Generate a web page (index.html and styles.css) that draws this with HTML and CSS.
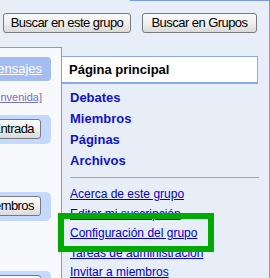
FILE: index.html
```html
<!DOCTYPE html>
<html lang="es">
<head>
<meta charset="utf-8">
<title>Grupo</title>
<link rel="stylesheet" href="styles.css">
</head>
<body>
<div class="page">
  <div class="top">
    <div class="topline"></div>
    <div class="search">
      <button class="btn btn-this">Buscar en este grupo</button>
      <button class="btn btn-all">Buscar en Grupos</button>
    </div>
  </div>
  <div class="main">
    <aside class="side">
      <div class="side-inner">
        <a class="tab" href="#">Mensajes</a>
        <a class="welcome" href="#">[Bienvenida]</a>
        <div class="pill pill-first"><button class="btn btn-side">Entrada</button></div>
        <div class="pill pill-second"><button class="btn btn-side">Miembros</button></div>
        <div class="pill pill-third"><button class="btn btn-side">Nuevo</button></div>
      </div>
    </aside>
    <nav class="nav">
      <div class="home">Página principal</div>
      <ul class="primary">
        <li><a href="#">Debates</a></li>
        <li><a href="#">Miembros</a></li>
        <li><a href="#">Páginas</a></li>
        <li><a href="#">Archivos</a></li>
      </ul>
      <div class="sep"></div>
      <ul class="secondary">
        <li><a href="#">Acerca de este grupo</a></li>
        <li><a href="#">Editar mi suscripción</a></li>
        <li><a href="#">Configuración del grupo</a></li>
        <li><a href="#">Tareas de administración</a></li>
        <li><a href="#">Invitar a miembros</a></li>
      </ul>
    </nav>
  </div>
  <div class="highlight"></div>
</div>
</body>
</html>
```
FILE: styles.css
```css
* { box-sizing: border-box; }
html, body { margin: 0; padding: 0; }
body {
  background: #e8eef7;
  font-family: "Liberation Sans", Arial, sans-serif;
  width: 270px;
  height: 278px;
  overflow: hidden;
}
.page {
  position: relative;
  width: 270px;
  height: 278px;
  border-right: 1px solid #7b9be0;
  background: #e8eef7;
}
.top { height: 47px; }
.topline {
  height: 1px;
  margin-left: 130px;
  background: #7b9be0;
}
.search {
  display: flex;
  gap: 11px;
  padding: 12px 0 0 3px;
}
.btn {
  font-family: "Liberation Sans", Arial, sans-serif;
  font-size: 13px;
  letter-spacing: -0.55px;
  color: #000;
  height: 20px;
  padding: 0 6px;
  border: 1px solid #7a7a7a;
  border-radius: 3px;
  background: linear-gradient(#fbfbfb, #f0f0f0 50%, #dadada);
  line-height: 18px;
  white-space: nowrap;
}
.btn-this { width: 128px; }
.btn-all { width: 115px; }
.main {
  display: flex;
  height: 231px;
}
.side {
  width: 62px;
  flex: none;
  border-top: 1px solid #7b9be0;
  border-right: 1px solid #7b9be0;
  background: #f7f9fd;
  overflow: hidden;
}
.side-inner {
  display: flex;
  flex-direction: column;
  align-items: flex-end;
  padding: 9px 10px 0 0;
}
.tab {
  flex: none;
  width: 90px;
  height: 24px;
  line-height: 24px;
  padding-right: 9px;
  text-align: right;
  background: #a3bdf0;
  border-radius: 4px;
  color: #fff;
  font-size: 13px;
  text-decoration: underline;
  white-space: nowrap;
}
.welcome {
  flex: none;
  margin: 9px 9px 0 0;
  font-size: 11px;
  line-height: 14px;
  color: #7b6fb8;
  white-space: nowrap;
}
.pill {
  flex: none;
  width: 100px;
  display: flex;
  justify-content: flex-end;
  padding: 4px 10px 5px 0;
  background: #c3d9ff;
  border-radius: 5px;
}
.pill-first { margin-top: 11px; }
.pill-second { margin-top: 48px; }
.pill-third { margin-top: 50px; }
.btn-side { flex: none; }
.nav {
  flex: 1;
  padding-top: 9px;
}
.home {
  margin-right: 11px;
  height: 28px;
  background: #fff;
  border: 1px solid #8aaae8;
  border-left: none;
  border-bottom-width: 2px;
  padding-left: 7px;
  font-size: 13px;
  font-weight: bold;
  line-height: 25px;
  color: #000;
}
ul { list-style: none; margin: 0; padding: 0; }
.primary {
  margin-top: 3px;
  padding-left: 8px;
  font-size: 13px;
  font-weight: bold;
  line-height: 21px;
}
.primary a { color: #1212c8; text-decoration: none; }
.sep {
  margin: 6px 10px 0 8px;
  border-top: 1px solid #8aaae8;
}
.secondary {
  margin-top: 7px;
  padding-left: 8px;
  font-size: 12px;
  line-height: 19.5px;
}
.secondary a { color: #0000cc; text-decoration: underline; }
.highlight {
  position: absolute;
  left: 58px;
  top: 213px;
  width: 156px;
  height: 39px;
  border: 6px solid #00aa00;
}
```
